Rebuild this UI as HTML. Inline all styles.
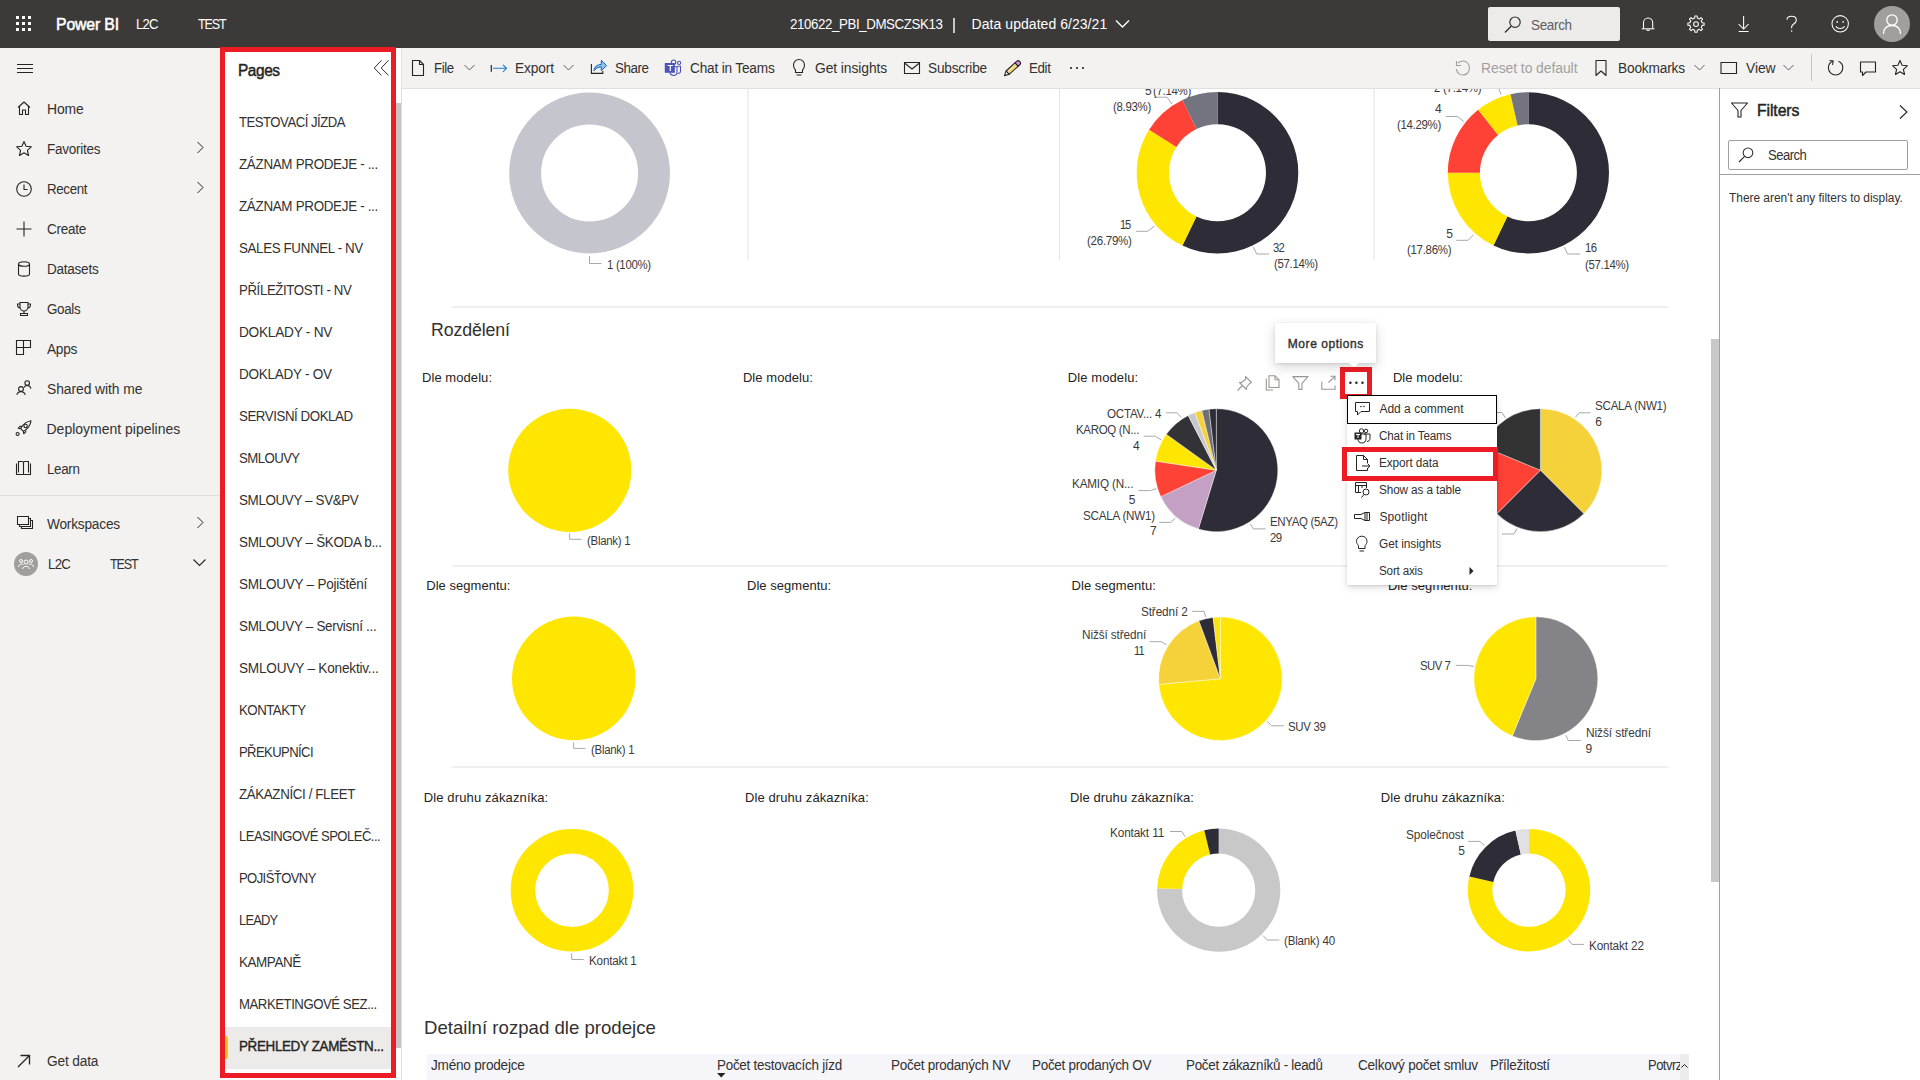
<!DOCTYPE html><html><head><meta charset="utf-8"><style>
*{margin:0;padding:0;box-sizing:border-box}
html,body{width:1920px;height:1080px;overflow:hidden;background:#fff;font-family:"Liberation Sans",sans-serif;position:relative}
.t{position:absolute;white-space:nowrap;line-height:1}
.a{position:absolute}
svg{position:absolute;overflow:visible}
</style></head><body>
<div class="a" style="left:747px;top:88px;width:2px;height:172px;background:#f0f0f0"></div><div class="a" style="left:1059px;top:88px;width:1px;height:172px;background:#e3e3e3"></div><div class="a" style="left:1373px;top:88px;width:2px;height:172px;background:#f0f0f0"></div><div class="a" style="left:452px;top:306px;width:1216px;height:2px;background:#efefef"></div><div class="a" style="left:452px;top:565px;width:1216px;height:2px;background:#efefef"></div><div class="a" style="left:452px;top:766px;width:1216px;height:2px;background:#efefef"></div><svg style="left:0;top:0" width="1920" height="1080"><circle cx="589.6" cy="173" r="64.45" stroke="#c5c5cd" stroke-width="31.900000000000006" fill="none"/><path d="M589.5 256.0 L589.5 263.5 L601.5 263.5" stroke="#a8a8a8" stroke-width="1" fill="none"/><path d="M1217.50 92.00 A80.8 80.8 0 1 1 1182.44 245.60 L1196.46 216.50 A48.5 48.5 0 1 0 1217.50 124.30 Z" fill="#2e2d37"/><path d="M1182.44 245.60 A80.8 80.8 0 0 1 1149.08 129.81 L1176.43 147.00 A48.5 48.5 0 0 0 1196.46 216.50 Z" fill="#ffe600"/><path d="M1149.08 129.81 A80.8 80.8 0 0 1 1182.44 100.00 L1196.46 129.10 A48.5 48.5 0 0 0 1176.43 147.00 Z" fill="#ff4136"/><path d="M1182.44 100.00 A80.8 80.8 0 0 1 1217.50 92.00 L1217.50 124.30 A48.5 48.5 0 0 0 1196.46 129.10 Z" fill="#747480"/><path d="M1528.40 92.20 A80.6 80.6 0 1 1 1493.43 245.42 L1507.36 216.50 A48.5 48.5 0 1 0 1528.40 124.30 Z" fill="#2e2d37"/><path d="M1493.43 245.42 A80.6 80.6 0 0 1 1447.80 172.80 L1479.90 172.80 A48.5 48.5 0 0 0 1507.36 216.50 Z" fill="#ffe600"/><path d="M1447.80 172.80 A80.6 80.6 0 0 1 1478.15 109.78 L1498.16 134.88 A48.5 48.5 0 0 0 1479.90 172.80 Z" fill="#ff4136"/><path d="M1478.15 109.78 A80.6 80.6 0 0 1 1510.46 94.22 L1517.61 125.52 A48.5 48.5 0 0 0 1498.16 134.88 Z" fill="#ffe600"/><path d="M1510.46 94.22 A80.6 80.6 0 0 1 1528.40 92.20 L1528.40 124.30 A48.5 48.5 0 0 0 1517.61 125.52 Z" fill="#747480"/><path d="M1253.3 247.2 L1256.7 254.0 L1268.9 254.0" stroke="#a8a8a8" stroke-width="1" fill="none"/><path d="M1154.2 226.2 L1147.7 231.3 L1136.2 231.3" stroke="#a8a8a8" stroke-width="1" fill="none"/><path d="M1172.0 104.0 L1167.0 97.2 L1154.0 97.2" stroke="#a8a8a8" stroke-width="1" fill="none"/><path d="M1564.4 247.2 L1567.5 254.0 L1580.0 254.0" stroke="#a8a8a8" stroke-width="1" fill="none"/><path d="M1473.5 234.8 L1468.1 240.3 L1456.3 240.3" stroke="#a8a8a8" stroke-width="1" fill="none"/><path d="M1463.7 121.5 L1457.5 116.5 L1445.8 116.5" stroke="#a8a8a8" stroke-width="1" fill="none"/><path d="M1501.2 94.5 L1499.0 89.0" stroke="#a8a8a8" stroke-width="1" fill="none"/><circle cx="569.8" cy="470.3" r="61.6" fill="#ffe600"/><path d="M569.6 533.3 L569.6 539.3 L581.6 539.3" stroke="#a8a8a8" stroke-width="1" fill="none"/><path d="M1216.30 470.20 L1216.30 408.70 A61.5 61.5 0 1 1 1198.34 529.02 Z" fill="#2e2d37" stroke="#fff" stroke-width="0.4"/><path d="M1216.30 470.20 L1198.34 529.02 A61.5 61.5 0 0 1 1160.78 496.65 Z" fill="#c4a0c4" stroke="#fff" stroke-width="0.4"/><path d="M1216.30 470.20 L1160.78 496.65 A61.5 61.5 0 0 1 1155.47 461.12 Z" fill="#ff4136" stroke="#fff" stroke-width="0.4"/><path d="M1216.30 470.20 L1155.47 461.12 A61.5 61.5 0 0 1 1166.33 434.35 Z" fill="#ffe600" stroke="#fff" stroke-width="0.4"/><path d="M1216.30 470.20 L1166.33 434.35 A61.5 61.5 0 0 1 1188.22 415.49 Z" fill="#333337" stroke="#fff" stroke-width="0.4"/><path d="M1216.30 470.20 L1188.22 415.49 A61.5 61.5 0 0 1 1194.89 412.55 Z" fill="#c8c8d0" stroke="#fff" stroke-width="0.4"/><path d="M1216.30 470.20 L1194.89 412.55 A61.5 61.5 0 0 1 1201.85 410.42 Z" fill="#f6d23a" stroke="#fff" stroke-width="0.4"/><path d="M1216.30 470.20 L1201.85 410.42 A61.5 61.5 0 0 1 1209.03 409.13 Z" fill="#6f6f78" stroke="#fff" stroke-width="0.4"/><path d="M1216.30 470.20 L1209.03 409.13 A61.5 61.5 0 0 1 1216.30 408.70 Z" fill="#2e2d37" stroke="#fff" stroke-width="0.4"/><path d="M1250.3 523.8 L1253.4 528.9 L1265.6 528.9" stroke="#a8a8a8" stroke-width="1" fill="none"/><path d="M1175.4 518.1 L1170.7 522.4 L1159.3 522.4" stroke="#a8a8a8" stroke-width="1" fill="none"/><path d="M1156.2 488.6 L1150.6 490.6 L1138.5 490.6" stroke="#a8a8a8" stroke-width="1" fill="none"/><path d="M1161.3 439.9 L1155.3 436.2 L1143.9 436.2" stroke="#a8a8a8" stroke-width="1" fill="none"/><path d="M1181.2 417.4 L1177.1 412.8 L1166.0 412.8" stroke="#a8a8a8" stroke-width="1" fill="none"/><path d="M1540.40 470.20 L1540.40 408.70 A61.5 61.5 0 0 1 1583.89 513.69 Z" fill="#f6d23a" stroke="#fff" stroke-width="0.4"/><path d="M1540.40 470.20 L1583.89 513.69 A61.5 61.5 0 0 1 1496.91 513.69 Z" fill="#2e2d37" stroke="#fff" stroke-width="0.4"/><path d="M1540.40 470.20 L1496.91 513.69 A61.5 61.5 0 0 1 1483.58 446.66 Z" fill="#ff4136" stroke="#fff" stroke-width="0.4"/><path d="M1540.40 470.20 L1483.58 446.66 A61.5 61.5 0 0 1 1540.40 408.70 Z" fill="#333333" stroke="#fff" stroke-width="0.4"/><path d="M1505.5 418.0 L1502.0 412.5 L1497.0 412.5" stroke="#a8a8a8" stroke-width="1" fill="none"/><path d="M1517.0 528.5 L1514.0 534.0 L1502.0 534.0" stroke="#a8a8a8" stroke-width="1" fill="none"/><path d="M1575.3 417.5 L1579.0 412.8 L1590.6 412.8" stroke="#a8a8a8" stroke-width="1" fill="none"/><circle cx="573.8" cy="678.4" r="61.8" fill="#ffe600"/><path d="M573.6 742.3 L573.6 748.4 L585.5 748.4" stroke="#a8a8a8" stroke-width="1" fill="none"/><path d="M1220.40 678.80 L1220.40 617.00 A61.8 61.8 0 1 1 1158.84 684.29 Z" fill="#ffe600" stroke="#fff" stroke-width="0.4"/><path d="M1220.40 678.80 L1158.84 684.29 A61.8 61.8 0 0 1 1198.88 620.87 Z" fill="#f6d23a" stroke="#fff" stroke-width="0.4"/><path d="M1220.40 678.80 L1198.88 620.87 A61.8 61.8 0 0 1 1213.09 617.43 Z" fill="#2e2d37" stroke="#fff" stroke-width="0.4"/><path d="M1220.40 678.80 L1213.09 617.43 A61.8 61.8 0 0 1 1220.40 617.00 Z" fill="#fbe30f" stroke="#fff" stroke-width="0.4"/><path d="M1267.1 721.5 L1271.7 725.8 L1283.8 725.8" stroke="#a8a8a8" stroke-width="1" fill="none"/><path d="M1166.7 645.0 L1161.3 641.7 L1149.6 641.7" stroke="#a8a8a8" stroke-width="1" fill="none"/><path d="M1205.8 617.1 L1204.2 611.3 L1192.1 611.3" stroke="#a8a8a8" stroke-width="1" fill="none"/><path d="M1535.90 678.70 L1535.90 616.80 A61.9 61.9 0 1 1 1512.21 735.89 Z" fill="#838388" stroke="#fff" stroke-width="0.4"/><path d="M1535.90 678.70 L1512.21 735.89 A61.9 61.9 0 0 1 1535.90 616.80 Z" fill="#ffe600" stroke="#fff" stroke-width="0.4"/><path d="M1473.8 666.5 L1467.5 665.4 L1455.6 665.4" stroke="#a8a8a8" stroke-width="1" fill="none"/><path d="M1565.7 735.0 L1568.3 740.5 L1580.8 740.5" stroke="#a8a8a8" stroke-width="1" fill="none"/><circle cx="572" cy="890.2" r="49.05" stroke="#ffe600" stroke-width="24.5" fill="none"/><path d="M571.7 953.3 L571.7 959.5 L583.7 959.5" stroke="#a8a8a8" stroke-width="1" fill="none"/><path d="M1218.70 828.60 A61.6 61.6 0 1 1 1157.13 888.37 L1182.12 889.12 A36.6 36.6 0 1 0 1218.70 853.60 Z" fill="#c8c8c8"/><path d="M1157.13 888.37 A61.6 61.6 0 0 1 1204.23 830.32 L1210.10 854.62 A36.6 36.6 0 0 0 1182.12 889.12 Z" fill="#ffe600"/><path d="M1204.23 830.32 A61.6 61.6 0 0 1 1218.70 828.60 L1218.70 853.60 A36.6 36.6 0 0 0 1210.10 854.62 Z" fill="#2e2d37"/><path d="M1263.0 935.6 L1267.2 940.0 L1279.4 940.0" stroke="#a8a8a8" stroke-width="1" fill="none"/><path d="M1185.2 836.7 L1181.8 831.5 L1170.0 831.5" stroke="#a8a8a8" stroke-width="1" fill="none"/><path d="M1529.00 829.00 A61.2 61.2 0 1 1 1469.33 876.58 L1493.32 882.06 A36.6 36.6 0 1 0 1529.00 853.60 Z" fill="#ffe600"/><path d="M1469.33 876.58 A61.2 61.2 0 0 1 1515.38 830.53 L1520.86 854.52 A36.6 36.6 0 0 0 1493.32 882.06 Z" fill="#2e2d37"/><path d="M1515.38 830.53 A61.2 61.2 0 0 1 1529.00 829.00 L1529.00 853.60 A36.6 36.6 0 0 0 1520.86 854.52 Z" fill="#e1e1e1"/><path d="M1568.3 939.8 L1572.0 944.4 L1584.0 944.4" stroke="#a8a8a8" stroke-width="1" fill="none"/><path d="M1484.6 845.5 L1479.9 841.4 L1468.2 841.4" stroke="#a8a8a8" stroke-width="1" fill="none"/></svg><div class="t " style="left:606.60px;top:258.62px;font-size:12px;color:#3b3a39;font-weight:normal;letter-spacing:-0.337px;transform:scaleX(0.9516);transform-origin:0.00px 0;">1 (100%)</div>
<div class="t " style="left:1273.40px;top:242.12px;font-size:12px;color:#3b3a39;font-weight:normal;letter-spacing:-0.810px;transform:scaleX(0.9392);transform-origin:0.00px 0;">32</div>
<div class="t " style="left:1273.60px;top:257.72px;font-size:12px;color:#3b3a39;font-weight:normal;letter-spacing:-0.337px;transform:scaleX(0.9516);transform-origin:0.00px 0;">(57.14%)</div>
<div class="t " style="left:1120.40px;top:218.72px;font-size:12px;color:#3b3a39;font-weight:normal;letter-spacing:-1.110px;transform:scaleX(0.9167);transform-origin:0.00px 0;">15</div>
<div class="t " style="left:1086.80px;top:234.72px;font-size:12px;color:#3b3a39;font-weight:normal;letter-spacing:-0.273px;transform:scaleX(0.9608);transform-origin:0.00px 0;">(26.79%)</div>
<div class="t " style="left:1112.50px;top:101.22px;font-size:12px;color:#3b3a39;font-weight:normal;letter-spacing:-0.325px;transform:scaleX(0.9536);transform-origin:0.00px 0;">(8.93%)</div>
<div class="t " style="left:1145.00px;top:84.72px;font-size:12px;color:#3b3a39;font-weight:normal;letter-spacing:0.000px;">5</div>
<div class="t " style="left:1152.80px;top:84.72px;font-size:12px;color:#3b3a39;font-weight:normal;letter-spacing:-0.317px;transform:scaleX(0.9548);transform-origin:0.00px 0;">(7.14%)</div>
<div class="t " style="left:1585.00px;top:242.02px;font-size:12px;color:#3b3a39;font-weight:normal;letter-spacing:-0.710px;transform:scaleX(0.9467);transform-origin:0.00px 0;">16</div>
<div class="t " style="left:1584.80px;top:258.62px;font-size:12px;color:#3b3a39;font-weight:normal;letter-spacing:-0.337px;transform:scaleX(0.9516);transform-origin:0.00px 0;">(57.14%)</div>
<div class="t " style="left:1446.30px;top:228.02px;font-size:12px;color:#3b3a39;font-weight:normal;letter-spacing:0.000px;">5</div>
<div class="t " style="left:1406.90px;top:244.22px;font-size:12px;color:#3b3a39;font-weight:normal;letter-spacing:-0.309px;transform:scaleX(0.9557);transform-origin:0.00px 0;">(17.86%)</div>
<div class="t " style="left:1435.00px;top:102.62px;font-size:12px;color:#3b3a39;font-weight:normal;letter-spacing:0.000px;">4</div>
<div class="t " style="left:1396.90px;top:119.32px;font-size:12px;color:#3b3a39;font-weight:normal;letter-spacing:-0.330px;transform:scaleX(0.9526);transform-origin:0.00px 0;">(14.29%)</div>
<div class="t " style="left:1434.10px;top:81.92px;font-size:12px;color:#3b3a39;font-weight:normal;letter-spacing:-0.289px;transform:scaleX(0.9556);transform-origin:0.00px 0;">2 (7.14%)</div>
<div class="t " style="left:431.00px;top:321.12px;font-size:18px;color:#323130;font-weight:normal;letter-spacing:-0.131px;transform:scaleX(0.9871);transform-origin:0.00px 0;">Rozdělení</div>
<div class="t " style="left:422.00px;top:370.93px;font-size:13px;color:#252423;font-weight:normal;letter-spacing:0.064px;">Dle modelu:</div>
<div class="t " style="left:742.90px;top:370.93px;font-size:13px;color:#252423;font-weight:normal;letter-spacing:0.064px;">Dle modelu:</div>
<div class="t " style="left:1067.80px;top:370.93px;font-size:13px;color:#252423;font-weight:normal;letter-spacing:0.094px;">Dle modelu:</div>
<div class="t " style="left:1392.90px;top:370.93px;font-size:13px;color:#252423;font-weight:normal;letter-spacing:0.064px;">Dle modelu:</div>
<div class="t " style="left:426.25px;top:578.83px;font-size:13px;color:#252423;font-weight:normal;letter-spacing:0.029px;">Dle segmentu:</div>
<div class="t " style="left:747.00px;top:578.83px;font-size:13px;color:#252423;font-weight:normal;letter-spacing:0.029px;">Dle segmentu:</div>
<div class="t " style="left:1071.60px;top:578.83px;font-size:13px;color:#252423;font-weight:normal;letter-spacing:0.029px;">Dle segmentu:</div>
<div class="t " style="left:1387.90px;top:578.83px;font-size:13px;color:#252423;font-weight:normal;letter-spacing:0.062px;">Dle segmentu:</div>
<div class="t " style="left:423.75px;top:791.23px;font-size:13px;color:#252423;font-weight:normal;letter-spacing:0.124px;">Dle druhu zákazníka:</div>
<div class="t " style="left:745.00px;top:791.23px;font-size:13px;color:#252423;font-weight:normal;letter-spacing:0.088px;">Dle druhu zákazníka:</div>
<div class="t " style="left:1070.00px;top:791.23px;font-size:13px;color:#252423;font-weight:normal;letter-spacing:0.098px;">Dle druhu zákazníka:</div>
<div class="t " style="left:1380.80px;top:791.23px;font-size:13px;color:#252423;font-weight:normal;letter-spacing:0.098px;">Dle druhu zákazníka:</div>
<div class="t " style="left:586.60px;top:534.72px;font-size:12px;color:#3b3a39;font-weight:normal;letter-spacing:-0.288px;transform:scaleX(0.9521);transform-origin:0.00px 0;">(Blank) 1</div>
<div class="t " style="left:590.50px;top:743.82px;font-size:12px;color:#3b3a39;font-weight:normal;letter-spacing:-0.281px;transform:scaleX(0.9531);transform-origin:0.00px 0;">(Blank) 1</div>
<div class="t " style="left:588.90px;top:954.62px;font-size:12px;color:#3b3a39;font-weight:normal;letter-spacing:-0.188px;transform:scaleX(0.9704);transform-origin:0.00px 0;">Kontakt 1</div>
<div class="t " style="left:1107.30px;top:407.62px;font-size:12px;color:#3b3a39;font-weight:normal;letter-spacing:-0.230px;transform:scaleX(0.9646);transform-origin:0.00px 0;">OCTAV... 4</div>
<div class="t " style="left:1076.00px;top:424.02px;font-size:12px;color:#3b3a39;font-weight:normal;letter-spacing:-0.308px;transform:scaleX(0.9556);transform-origin:0.00px 0;">KAROQ (N...</div>
<div class="t " style="left:1133.10px;top:439.82px;font-size:12px;color:#3b3a39;font-weight:normal;letter-spacing:0.000px;">4</div>
<div class="t " style="left:1072.40px;top:477.72px;font-size:12px;color:#3b3a39;font-weight:normal;letter-spacing:-0.164px;transform:scaleX(0.9746);transform-origin:0.00px 0;">KAMIQ (N...</div>
<div class="t " style="left:1128.80px;top:493.82px;font-size:12px;color:#3b3a39;font-weight:normal;letter-spacing:0.000px;">5</div>
<div class="t " style="left:1082.80px;top:509.62px;font-size:12px;color:#3b3a39;font-weight:normal;letter-spacing:-0.229px;transform:scaleX(0.9701);transform-origin:0.00px 0;">SCALA (NW1)</div>
<div class="t " style="left:1149.90px;top:525.12px;font-size:12px;color:#3b3a39;font-weight:normal;letter-spacing:0.000px;">7</div>
<div class="t " style="left:1270.30px;top:515.82px;font-size:12px;color:#3b3a39;font-weight:normal;letter-spacing:-0.333px;transform:scaleX(0.9553);transform-origin:0.00px 0;">ENYAQ (5AZ)</div>
<div class="t " style="left:1270.30px;top:531.72px;font-size:12px;color:#3b3a39;font-weight:normal;letter-spacing:-0.710px;transform:scaleX(0.9467);transform-origin:0.00px 0;">29</div>
<div class="t " style="left:1595.30px;top:399.52px;font-size:12px;color:#3b3a39;font-weight:normal;letter-spacing:-0.254px;transform:scaleX(0.9669);transform-origin:0.00px 0;">SCALA (NW1)</div>
<div class="t " style="left:1595.30px;top:415.52px;font-size:12px;color:#3b3a39;font-weight:normal;letter-spacing:0.000px;">6</div>
<div class="t " style="left:1141.25px;top:605.62px;font-size:12px;color:#3b3a39;font-weight:normal;letter-spacing:-0.126px;transform:scaleX(0.9793);transform-origin:0.00px 0;">Střední 2</div>
<div class="t " style="left:1081.70px;top:628.82px;font-size:12px;color:#3b3a39;font-weight:normal;letter-spacing:-0.107px;transform:scaleX(0.9808);transform-origin:0.00px 0;">Nižší střední</div>
<div class="t " style="left:1133.75px;top:644.62px;font-size:12px;color:#3b3a39;font-weight:normal;letter-spacing:-0.990px;transform:scaleX(0.9207);transform-origin:0.00px 0;">11</div>
<div class="t " style="left:1288.30px;top:720.62px;font-size:12px;color:#3b3a39;font-weight:normal;letter-spacing:-0.364px;transform:scaleX(0.9560);transform-origin:0.00px 0;">SUV 39</div>
<div class="t " style="left:1420.40px;top:659.62px;font-size:12px;color:#3b3a39;font-weight:normal;letter-spacing:-0.485px;transform:scaleX(0.9441);transform-origin:0.00px 0;">SUV 7</div>
<div class="t " style="left:1585.80px;top:726.72px;font-size:12px;color:#3b3a39;font-weight:normal;letter-spacing:-0.065px;transform:scaleX(0.9883);transform-origin:0.00px 0;">Nižší střední</div>
<div class="t " style="left:1585.50px;top:742.52px;font-size:12px;color:#3b3a39;font-weight:normal;letter-spacing:0.000px;">9</div>
<div class="t " style="left:1109.90px;top:826.72px;font-size:12px;color:#3b3a39;font-weight:normal;letter-spacing:-0.126px;transform:scaleX(0.9800);transform-origin:0.00px 0;">Kontakt 11</div>
<div class="t " style="left:1284.10px;top:934.92px;font-size:12px;color:#3b3a39;font-weight:normal;letter-spacing:-0.201px;transform:scaleX(0.9669);transform-origin:0.00px 0;">(Blank) 40</div>
<div class="t " style="left:1406.20px;top:828.82px;font-size:12px;color:#3b3a39;font-weight:normal;letter-spacing:-0.089px;transform:scaleX(0.9865);transform-origin:0.00px 0;">Společnost</div>
<div class="t " style="left:1458.30px;top:844.72px;font-size:12px;color:#3b3a39;font-weight:normal;letter-spacing:0.000px;">5</div>
<div class="t " style="left:1589.20px;top:939.62px;font-size:12px;color:#3b3a39;font-weight:normal;letter-spacing:-0.137px;transform:scaleX(0.9786);transform-origin:0.00px 0;">Kontakt 22</div>
<div class="t " style="left:424.00px;top:1018.93px;font-size:18.6px;color:#323130;font-weight:normal;letter-spacing:0.012px;">Detailní rozpad dle prodejce</div>
<div class="a" style="left:427px;top:1054px;width:1262px;height:26px;background:#f5f5fa"></div><div class="a" style="left:1680px;top:1054px;width:9px;height:26px;background:#ececec"></div><div class="t " style="left:431.25px;top:1057.65px;font-size:14px;color:#323130;font-weight:normal;letter-spacing:-0.225px;transform:scaleX(0.9706);transform-origin:0.00px 0;">Jméno prodejce</div>
<div class="t " style="left:717.00px;top:1057.65px;font-size:14px;color:#323130;font-weight:normal;letter-spacing:-0.265px;transform:scaleX(0.9591);transform-origin:0.00px 0;">Počet testovacích jízd</div>
<div class="t " style="left:891.25px;top:1057.65px;font-size:14px;color:#323130;font-weight:normal;letter-spacing:-0.269px;transform:scaleX(0.9644);transform-origin:0.00px 0;">Počet prodaných NV</div>
<div class="t " style="left:1032.00px;top:1057.65px;font-size:14px;color:#323130;font-weight:normal;letter-spacing:-0.293px;transform:scaleX(0.9614);transform-origin:0.00px 0;">Počet prodaných OV</div>
<div class="t " style="left:1186.25px;top:1057.65px;font-size:14px;color:#323130;font-weight:normal;letter-spacing:-0.289px;transform:scaleX(0.9575);transform-origin:0.00px 0;">Počet zákazníků - leadů</div>
<div class="t " style="left:1357.80px;top:1057.65px;font-size:14px;color:#323130;font-weight:normal;letter-spacing:-0.233px;transform:scaleX(0.9674);transform-origin:0.00px 0;">Celkový počet smluv</div>
<div class="t " style="left:1490.00px;top:1057.65px;font-size:14px;color:#323130;font-weight:normal;letter-spacing:-0.245px;transform:scaleX(0.9589);transform-origin:0.00px 0;">Příležitostí</div>
<div class="a" style="left:1646px;top:1054px;width:34px;height:26px;overflow:hidden"><div class="t " style="left:1.50px;top:3.65px;font-size:14px;color:#323130;font-weight:normal;letter-spacing:-0.567px;transform:scaleX(0.9281);transform-origin:0.00px 0;">Potvrzeno</div>
</div><svg style="left:717px;top:1073px" width="10" height="6"><path d="M0 0 H8.5 L4.25 4.5 Z" fill="#252423"/></svg><svg style="left:1680px;top:1062px" width="9" height="8"><path d="M1.5 5.5 L4.5 2.5 L7.5 5.5" stroke="#252423" stroke-width="1" fill="none"/></svg><div class="a" style="left:0;top:0;width:1920px;height:48px;background:#3b3a39"></div><svg style="left:0;top:0" width="40" height="48"><rect x="16" y="16" width="3" height="3" fill="#fff"/><rect x="16" y="22" width="3" height="3" fill="#fff"/><rect x="16" y="28" width="3" height="3" fill="#fff"/><rect x="22" y="16" width="3" height="3" fill="#fff"/><rect x="22" y="22" width="3" height="3" fill="#fff"/><rect x="22" y="28" width="3" height="3" fill="#fff"/><rect x="28" y="16" width="3" height="3" fill="#fff"/><rect x="28" y="22" width="3" height="3" fill="#fff"/><rect x="28" y="28" width="3" height="3" fill="#fff"/></svg><div class="t " style="left:56.00px;top:16.69px;font-size:16px;color:#fff;font-weight:normal;letter-spacing:-0.134px;transform:scaleX(0.9855);transform-origin:0.00px 0;-webkit-text-stroke:0.55px #fff">Power BI</div>
<div class="t " style="left:135.60px;top:17.25px;font-size:14px;color:#fff;font-weight:normal;letter-spacing:-0.823px;transform:scaleX(0.9360);transform-origin:0.00px 0;">L2C</div>
<div class="t " style="left:197.50px;top:17.25px;font-size:14px;color:#fff;font-weight:normal;letter-spacing:-1.278px;transform:scaleX(0.8928);transform-origin:0.00px 0;">TEST</div>
<div class="t " style="left:790.30px;top:17.25px;font-size:14px;color:#fff;font-weight:normal;letter-spacing:-0.432px;transform:scaleX(0.9514);transform-origin:0.00px 0;">210622_PBI_DMSCZSK13</div>
<div class="a" style="left:952.5px;top:18px;width:2px;height:15px;background:#c8c6c4"></div><div class="t " style="left:971.60px;top:17.25px;font-size:14px;color:#fff;font-weight:normal;letter-spacing:0.048px;">Data updated 6/23/21</div>
<svg style="left:1115px;top:19px" width="16" height="10"><path d="M1 1.5 L7.5 8 L14 1.5" stroke="#fff" stroke-width="1.4" fill="none"/></svg><div class="a" style="left:1488px;top:7px;width:132px;height:34px;background:#edebe9;border-radius:2px"></div><svg style="left:1503px;top:15px" width="20" height="20"><circle cx="12" cy="7.2" r="5.2" stroke="#323130" stroke-width="1.2" fill="none"/><path d="M8.3 11 L2 17.5" stroke="#323130" stroke-width="1.3"/></svg><div class="t " style="left:1531.00px;top:18.25px;font-size:14px;color:#605e5c;font-weight:normal;letter-spacing:-0.338px;transform:scaleX(0.9619);transform-origin:0.00px 0;">Search</div>
<svg style="left:0;top:0" width="1920" height="48"><path d="M1643.5 28.5 V22.5 A4.6 4.6 0 0 1 1652.7 22.5 V28.5" stroke="#fff" stroke-width="1.05" fill="none"/><path d="M1641.7 28.8 H1654.5" stroke="#fff" stroke-width="1.05" fill="none" stroke-width="1.3"/><path d="M1646.6 29.5 A1.6 1.6 0 0 0 1649.6 29.5" stroke="#fff" stroke-width="1.05" fill="none"/><path d="M1694.71 18.04 L1694.86 15.98 L1697.14 15.98 L1697.29 18.04 L1699.38 18.90 L1700.93 17.55 L1702.55 19.17 L1701.20 20.72 L1702.06 22.81 L1704.12 22.96 L1704.12 25.24 L1702.06 25.39 L1701.20 27.48 L1702.55 29.03 L1700.93 30.65 L1699.38 29.30 L1697.29 30.16 L1697.14 32.22 L1694.86 32.22 L1694.71 30.16 L1692.62 29.30 L1691.07 30.65 L1689.45 29.03 L1690.80 27.48 L1689.94 25.39 L1687.88 25.24 L1687.88 22.96 L1689.94 22.81 L1690.80 20.72 L1689.45 19.17 L1691.07 17.55 L1692.62 18.90 Z" stroke="#fff" stroke-width="1.05" fill="none" stroke-linejoin="round"/><circle cx="1696" cy="24.1" r="2.4" stroke="#fff" stroke-width="1.05" fill="none"/><path d="M1743.6 16.1 V28.6 M1738.6 24 L1743.6 29 L1748.6 24" stroke="#fff" stroke-width="1.05" fill="none"/><path d="M1738.6 31.5 H1748.6" stroke="#fff" stroke-width="1.05" fill="none" stroke-width="1.2"/><path d="M1787 19.8 C1787 17.3 1789 16.3 1791.6 16.3 C1794.4 16.3 1796.3 18 1796.3 20.2 C1796.3 22.3 1795 23.2 1793.4 24.2 C1792.2 25 1791.6 25.8 1791.6 27.3 V28.2" stroke="#fff" stroke-width="1.05" fill="none"/><circle cx="1791.6" cy="31" r="0.75" fill="#fff"/><circle cx="1840.2" cy="23.8" r="8.2" stroke="#fff" stroke-width="1.05" fill="none" stroke-width="1.15"/><rect x="1836.5" y="21.2" width="1.5" height="1.5" fill="#fff"/><rect x="1842.4" y="21.2" width="1.5" height="1.5" fill="#fff"/><path d="M1835.8 26.3 C1837.5 29.3 1842.9 29.3 1844.6 26.3" stroke="#fff" stroke-width="1.05" fill="none"/></svg><div class="a" style="left:1874px;top:6px;width:36px;height:36px;border-radius:50%;background:#a19f9d"></div><svg style="left:1874px;top:6px" width="36" height="36"><circle cx="18" cy="14" r="5.2" stroke="#fff" stroke-width="1.3" fill="none"/><path d="M9.5 28 C9.5 22 13 19.5 18 19.5 C23 19.5 26.5 22 26.5 28" stroke="#fff" stroke-width="1.3" fill="none"/></svg><div class="a" style="left:0;top:48px;width:220px;height:1032px;background:#f3f2f1"></div><svg style="left:0;top:48px" width="40" height="40"><path d="M17 16.5 H33 M17 20.5 H33 M17 24.5 H33" stroke="#252423" stroke-width="1"/></svg><div class="t " style="left:46.50px;top:102.25px;font-size:14px;color:#323130;font-weight:normal;letter-spacing:-0.097px;transform:scaleX(0.9922);transform-origin:0.00px 0;">Home</div>
<div class="t " style="left:46.50px;top:142.25px;font-size:14px;color:#323130;font-weight:normal;letter-spacing:-0.252px;transform:scaleX(0.9649);transform-origin:0.00px 0;">Favorites</div>
<div class="t " style="left:46.50px;top:182.25px;font-size:14px;color:#323130;font-weight:normal;letter-spacing:-0.388px;transform:scaleX(0.9563);transform-origin:0.00px 0;">Recent</div>
<div class="t " style="left:46.50px;top:222.25px;font-size:14px;color:#323130;font-weight:normal;letter-spacing:-0.280px;transform:scaleX(0.9667);transform-origin:0.00px 0;">Create</div>
<div class="t " style="left:46.50px;top:262.25px;font-size:14px;color:#323130;font-weight:normal;letter-spacing:-0.259px;transform:scaleX(0.9671);transform-origin:0.00px 0;">Datasets</div>
<div class="t " style="left:46.50px;top:302.25px;font-size:14px;color:#323130;font-weight:normal;letter-spacing:-0.380px;transform:scaleX(0.9584);transform-origin:0.00px 0;">Goals</div>
<div class="t " style="left:46.50px;top:342.25px;font-size:14px;color:#323130;font-weight:normal;letter-spacing:-0.253px;transform:scaleX(0.9762);transform-origin:0.00px 0;">Apps</div>
<div class="t " style="left:46.50px;top:382.25px;font-size:14px;color:#323130;font-weight:normal;letter-spacing:-0.069px;transform:scaleX(0.9908);transform-origin:0.00px 0;">Shared with me</div>
<div class="t " style="left:46.50px;top:422.25px;font-size:14px;color:#323130;font-weight:normal;letter-spacing:-0.004px;">Deployment pipelines</div>
<div class="t " style="left:46.50px;top:462.25px;font-size:14px;color:#323130;font-weight:normal;letter-spacing:-0.380px;transform:scaleX(0.9576);transform-origin:0.00px 0;">Learn</div>
<svg style="left:15px;top:100px" width="18" height="18"><path d="M3 7.5 L9 2 L15 7.5 M4.5 6.5 V14.5 H7.5 V10 H10.5 V14.5 H13.5 V6.5" stroke="#252423" stroke-width="1.1" fill="none" stroke-linejoin="round"/></svg><svg style="left:15px;top:140px" width="18" height="18"><path d="M9 1.5 L11.1 6.3 L16.3 6.8 L12.4 10.3 L13.5 15.4 L9 12.8 L4.5 15.4 L5.6 10.3 L1.7 6.8 L6.9 6.3 Z" stroke="#252423" stroke-width="1.1" fill="none" stroke-linejoin="round"/></svg><svg style="left:15px;top:180px" width="18" height="18"><circle cx="9" cy="9" r="7.3" stroke="#252423" stroke-width="1.1" fill="none"/><path d="M9 4.5 V9.5 H12.5" stroke="#252423" stroke-width="1.1" fill="none"/></svg><svg style="left:15px;top:220px" width="18" height="18"><path d="M9 1.5 V16.5 M1.5 9 H16.5" stroke="#252423" stroke-width="1.1" fill="none"/></svg><svg style="left:15px;top:260px" width="18" height="18"><ellipse cx="9" cy="4" rx="5.5" ry="2.3" stroke="#252423" stroke-width="1.1" fill="none"/><path d="M3.5 4 V14 C3.5 16.8 14.5 16.8 14.5 14 V4" stroke="#252423" stroke-width="1.1" fill="none"/></svg><svg style="left:15px;top:300px" width="18" height="18"><path d="M5 2.5 H13 V7 C13 9.5 11 11 9 11 C7 11 5 9.5 5 7 Z M5 4 H2.5 C2.5 7 3.5 8 5.3 8 M13 4 H15.5 C15.5 7 14.5 8 12.7 8 M9 11 V13.5 M5.5 13.5 H12.5 V15.5 H5.5 Z" stroke="#252423" stroke-width="1.1" fill="none"/></svg><svg style="left:15px;top:340px" width="18" height="18"><path d="M1.5 0.5 H15.5 V7.5 H1.5 Z M8.5 0.5 V14.5 H1.5 V7.5" stroke="#252423" stroke-width="1.1" fill="none"/></svg><svg style="left:15px;top:380px" width="18" height="18"><circle cx="6" cy="9" r="2.4" stroke="#252423" stroke-width="1.1" fill="none"/><path d="M1.8 14.8 C2.5 12.3 4 11.6 6 11.6 C8 11.6 9.5 12.3 10.2 14.8" stroke="#252423" stroke-width="1.1" fill="none"/><circle cx="12.2" cy="3" r="2.3" stroke="#252423" stroke-width="1.1" fill="none"/><path d="M9 7.6 C9.7 6.2 10.8 5.5 12.2 5.5 C14 5.5 15.4 6.5 16 8.6" stroke="#252423" stroke-width="1.1" fill="none"/></svg><svg style="left:15px;top:420px" width="18" height="18"><path d="M16 0.8 C11.5 1.5 8.3 4 5.6 8.6 L8.4 11.4 C13 8.7 15.3 5.5 16 0.8 Z M5.6 8.6 L3.2 8.3 L5.2 6.2 H7.6 M8.4 11.4 L8.7 13.8 L10.8 11.8 V9.4" stroke="#252423" stroke-width="1.1" fill="none" stroke-linejoin="round"/><circle cx="10.6" cy="6" r="1.7" stroke="#252423" stroke-width="1.1" fill="none"/><circle cx="2.6" cy="14" r="1.5" stroke="#252423" stroke-width="1.1" fill="none"/></svg><svg style="left:15px;top:460px" width="18" height="18"><path d="M1.5 3.5 V14.5 H15.5 V3.5 M3.5 12.5 V1.5 H7.3 C8 1.5 8.5 2 8.5 2.8 V14.5 M8.5 2.8 C8.5 2 9 1.5 9.7 1.5 H13.5 V12.5" stroke="#252423" stroke-width="1.1" fill="none"/></svg><svg style="left:194px;top:141px" width="12" height="14"><path d="M3.5 1 L9 6.5 L3.5 12" stroke="#252423" stroke-width="1" fill="none"/></svg><svg style="left:194px;top:181px" width="12" height="14"><path d="M3.5 1 L9 6.5 L3.5 12" stroke="#252423" stroke-width="1" fill="none"/></svg><svg style="left:194px;top:516px" width="12" height="14"><path d="M3.5 1 L9 6.5 L3.5 12" stroke="#252423" stroke-width="1" fill="none"/></svg><div class="a" style="left:0;top:495px;width:220px;height:1px;background:#e1dfdd"></div><div class="t " style="left:47.20px;top:516.95px;font-size:14px;color:#323130;font-weight:normal;letter-spacing:-0.205px;transform:scaleX(0.9760);transform-origin:0.00px 0;">Workspaces</div>
<svg style="left:15px;top:515px" width="20" height="18"><path d="M2.5 1.5 H13.5 V9.5 H2.5 Z M4.5 9.5 V11.5 H15.5 V3.5 H13.5 M6.5 11.5 V13.5 H17.5 V5.5 H15.5" stroke="#252423" stroke-width="1.05" fill="none"/></svg><div class="a" style="left:14px;top:551.5px;width:24px;height:24px;border-radius:50%;background:#a19f9d"></div><svg style="left:14px;top:551.5px" width="24" height="24"><circle cx="12" cy="10" r="2" stroke="#fff" fill="none"/><circle cx="7" cy="9" r="1.5" stroke="#fff" fill="none"/><circle cx="17" cy="9" r="1.5" stroke="#fff" fill="none"/><path d="M8.5 17 C9 13.5 15 13.5 15.5 17 M4.5 15 C5 12 8 11.5 9.5 12.5 M19.5 15 C19 12 16 11.5 14.5 12.5" stroke="#fff" fill="none"/></svg><div class="t " style="left:48.40px;top:557.15px;font-size:14px;color:#323130;font-weight:normal;letter-spacing:-0.748px;transform:scaleX(0.9418);transform-origin:0.00px 0;">L2C</div>
<div class="t " style="left:110.20px;top:557.15px;font-size:14px;color:#323130;font-weight:normal;letter-spacing:-1.228px;transform:scaleX(0.8970);transform-origin:0.00px 0;">TEST</div>
<svg style="left:192px;top:558px" width="16" height="10"><path d="M1.5 1.5 L7.5 7.5 L13.5 1.5" stroke="#252423" stroke-width="1.1" fill="none"/></svg><svg style="left:15px;top:1052px" width="18" height="18"><path d="M3 15 L14 4 M5.5 3.5 H14.5 V12.5" stroke="#252423" stroke-width="1.3" fill="none"/></svg><div class="t " style="left:46.60px;top:1054.05px;font-size:14px;color:#323130;font-weight:normal;letter-spacing:-0.161px;transform:scaleX(0.9790);transform-origin:0.00px 0;">Get data</div>
<div class="a" style="left:220px;top:48px;width:181px;height:1032px;background:#fff"></div><div class="t " style="left:237.50px;top:62.79px;font-size:16px;color:#252423;font-weight:normal;letter-spacing:-0.420px;transform:scaleX(0.9630);transform-origin:0.00px 0;-webkit-text-stroke:0.45px #252423">Pages</div>
<svg style="left:372px;top:58px" width="20" height="20"><path d="M9.5 2.3 L2.2 10 L9.5 17.4 M16.5 2.3 L9.2 10 L16.5 17.4" stroke="#323130" stroke-width="1" fill="none"/></svg><div class="a" style="left:225px;top:1027px;width:166px;height:42px;background:#edebe9"></div><div class="a" style="left:225px;top:1036px;width:3px;height:23px;background:#f2c811;border-radius:0 2px 2px 0"></div><div class="t " style="left:238.50px;top:114.95px;font-size:14px;color:#323130;font-weight:normal;letter-spacing:-0.528px;transform:scaleX(0.9388);transform-origin:0.00px 0;">TESTOVACÍ JÍZDA</div>
<div class="t " style="left:238.50px;top:156.95px;font-size:14px;color:#323130;font-weight:normal;letter-spacing:-0.334px;transform:scaleX(0.9582);transform-origin:0.00px 0;">ZÁZNAM PRODEJE - ...</div>
<div class="t " style="left:238.50px;top:198.95px;font-size:14px;color:#323130;font-weight:normal;letter-spacing:-0.334px;transform:scaleX(0.9582);transform-origin:0.00px 0;">ZÁZNAM PRODEJE - ...</div>
<div class="t " style="left:238.50px;top:240.95px;font-size:14px;color:#323130;font-weight:normal;letter-spacing:-0.388px;transform:scaleX(0.9544);transform-origin:0.00px 0;">SALES FUNNEL - NV</div>
<div class="t " style="left:238.50px;top:282.95px;font-size:14px;color:#323130;font-weight:normal;letter-spacing:-0.418px;transform:scaleX(0.9468);transform-origin:0.00px 0;">PŘÍLEŽITOSTI - NV</div>
<div class="t " style="left:238.50px;top:324.95px;font-size:14px;color:#323130;font-weight:normal;letter-spacing:-0.235px;transform:scaleX(0.9738);transform-origin:0.00px 0;">DOKLADY - NV</div>
<div class="t " style="left:238.50px;top:366.95px;font-size:14px;color:#323130;font-weight:normal;letter-spacing:-0.292px;transform:scaleX(0.9676);transform-origin:0.00px 0;">DOKLADY - OV</div>
<div class="t " style="left:238.50px;top:408.95px;font-size:14px;color:#323130;font-weight:normal;letter-spacing:-0.456px;transform:scaleX(0.9496);transform-origin:0.00px 0;">SERVISNÍ DOKLAD</div>
<div class="t " style="left:238.50px;top:450.95px;font-size:14px;color:#323130;font-weight:normal;letter-spacing:-0.622px;transform:scaleX(0.9455);transform-origin:0.00px 0;">SMLOUVY</div>
<div class="t " style="left:238.50px;top:492.95px;font-size:14px;color:#323130;font-weight:normal;letter-spacing:-0.389px;transform:scaleX(0.9583);transform-origin:0.00px 0;">SMLOUVY – SV&amp;PV</div>
<div class="t " style="left:238.50px;top:534.95px;font-size:14px;color:#323130;font-weight:normal;letter-spacing:-0.332px;transform:scaleX(0.9593);transform-origin:0.00px 0;">SMLOUVY – ŠKODA b...</div>
<div class="t " style="left:238.50px;top:576.95px;font-size:14px;color:#323130;font-weight:normal;letter-spacing:-0.261px;transform:scaleX(0.9659);transform-origin:0.00px 0;">SMLOUVY – Pojištění</div>
<div class="t " style="left:238.50px;top:618.95px;font-size:14px;color:#323130;font-weight:normal;letter-spacing:-0.299px;transform:scaleX(0.9582);transform-origin:0.00px 0;">SMLOUVY – Servisní ...</div>
<div class="t " style="left:238.50px;top:660.95px;font-size:14px;color:#323130;font-weight:normal;letter-spacing:-0.211px;transform:scaleX(0.9716);transform-origin:0.00px 0;">SMLOUVY – Konektiv...</div>
<div class="t " style="left:238.50px;top:702.95px;font-size:14px;color:#323130;font-weight:normal;letter-spacing:-0.544px;transform:scaleX(0.9489);transform-origin:0.00px 0;">KONTAKTY</div>
<div class="t " style="left:238.50px;top:744.95px;font-size:14px;color:#323130;font-weight:normal;letter-spacing:-0.634px;transform:scaleX(0.9334);transform-origin:0.00px 0;">PŘEKUPNÍCI</div>
<div class="t " style="left:238.50px;top:786.95px;font-size:14px;color:#323130;font-weight:normal;letter-spacing:-0.384px;transform:scaleX(0.9522);transform-origin:0.00px 0;">ZÁKAZNÍCI / FLEET</div>
<div class="t " style="left:238.50px;top:828.95px;font-size:14px;color:#323130;font-weight:normal;letter-spacing:-0.571px;transform:scaleX(0.9332);transform-origin:0.00px 0;">LEASINGOVÉ SPOLEČ...</div>
<div class="t " style="left:238.50px;top:870.95px;font-size:14px;color:#323130;font-weight:normal;letter-spacing:-0.649px;transform:scaleX(0.9341);transform-origin:0.00px 0;">POJIŠŤOVNY</div>
<div class="t " style="left:238.50px;top:912.95px;font-size:14px;color:#323130;font-weight:normal;letter-spacing:-0.878px;transform:scaleX(0.9236);transform-origin:0.00px 0;">LEADY</div>
<div class="t " style="left:238.50px;top:954.95px;font-size:14px;color:#323130;font-weight:normal;letter-spacing:-0.442px;transform:scaleX(0.9606);transform-origin:0.00px 0;">KAMPANĚ</div>
<div class="t " style="left:238.50px;top:996.95px;font-size:14px;color:#323130;font-weight:normal;letter-spacing:-0.498px;transform:scaleX(0.9425);transform-origin:0.00px 0;">MARKETINGOVÉ SEZ...</div>
<div class="t " style="left:238.50px;top:1038.95px;font-size:14px;color:#252423;font-weight:normal;letter-spacing:-0.362px;transform:scaleX(0.9586);transform-origin:0.00px 0;-webkit-text-stroke:0.4px #252423">PŘEHLEDY ZAMĚSTN...</div>
<div class="a" style="left:396px;top:103px;width:5px;height:945px;background:#c8c6c4"></div><div class="a" style="left:401px;top:48px;width:1px;height:1032px;background:#e1dfdd"></div><div class="a" style="left:220px;top:47px;width:176px;height:1031px;border:5px solid #ed1c24"></div><div class="a" style="left:402px;top:48px;width:1518px;height:41px;background:#f3f2f1;border-bottom:1px solid #e1dfdd"></div><svg style="left:410px;top:59px" width="16" height="18"><path d="M2.5 1.5 H9.5 L13.5 5.5 V16.5 H2.5 Z M9.5 1.5 V5.5 H13.5" stroke="#252423" stroke-width="1.1" fill="none" stroke-linejoin="round"/></svg><div class="t " style="left:434.00px;top:61.25px;font-size:14px;color:#323130;font-weight:normal;letter-spacing:-0.423px;transform:scaleX(0.9437);transform-origin:0.00px 0;">File</div>
<svg style="left:463px;top:63px" width="14" height="10"><path d="M1.5 2 L6.5 7 L11.5 2" stroke="#605e5c" stroke-width="1" fill="none"/></svg><svg style="left:0;top:0" width="1920" height="90"><path d="M491.3 65 V71.8" stroke="#252423" stroke-width="1.2"/><path d="M493 68.3 H506.5 M503 64.8 L506.5 68.3 L503 71.8" stroke="#1b7fc9" stroke-width="1.1" fill="none"/></svg><div class="t " style="left:515.00px;top:61.25px;font-size:14px;color:#323130;font-weight:normal;letter-spacing:-0.146px;transform:scaleX(0.9820);transform-origin:0.00px 0;">Export</div>
<svg style="left:562px;top:63px" width="14" height="10"><path d="M1.5 2 L6.5 7 L11.5 2" stroke="#605e5c" stroke-width="1" fill="none"/></svg><svg style="left:0;top:0" width="1920" height="90"><path d="M591.4 64 V73.4 H602.8 V71" stroke="#252423" stroke-width="1.1" fill="none"/><path d="M594 70.8 C594.5 66.5 597 64.6 601.3 64.4 V60.3 L606.6 65.5 L601.3 70.8 V66.9 C598.2 66.9 595.8 68.3 594 70.8 Z" fill="#8cc1ef" stroke="#1565b8" stroke-width="1" stroke-linejoin="round"/></svg><div class="t " style="left:615.00px;top:61.25px;font-size:14px;color:#323130;font-weight:normal;letter-spacing:-0.423px;transform:scaleX(0.9548);transform-origin:0.00px 0;">Share</div>
<svg style="left:0;top:0" width="1920" height="90"><g stroke="#464eb8" stroke-width="1.05" fill="none"><circle cx="673.6" cy="62.2" r="2.2"/><circle cx="679.1" cy="62.9" r="1.6"/><path d="M674.5 66.7 H677 V72 C677 74.3 675.4 75.4 673.5 75.4 C671.9 75.4 670.5 74.5 669.8 72.8 M677.4 66.3 H680.5 V71.3 C680.5 72.7 679.5 73.5 677.6 73.4"/></g><rect x="664.8" y="63" width="10" height="9.8" fill="#4b53bc"/><path d="M667.6 65.5 H673 M670.3 65.5 V71" stroke="#fff" stroke-width="1.2"/></svg><div class="t " style="left:689.80px;top:61.25px;font-size:14px;color:#323130;font-weight:normal;letter-spacing:-0.190px;transform:scaleX(0.9745);transform-origin:0.00px 0;">Chat in Teams</div>
<svg style="left:791px;top:58px" width="16" height="20"><path d="M4.5 12 C3 10.5 2.5 9 2.5 7 C2.5 3.8 5 1.5 8 1.5 C11 1.5 13.5 3.8 13.5 7 C13.5 9 13 10.5 11.5 12 V14.5 H4.5 Z M5.5 17 H10.5" stroke="#252423" stroke-width="1.1" fill="none"/></svg><div class="t " style="left:815.20px;top:61.25px;font-size:14px;color:#323130;font-weight:normal;letter-spacing:-0.078px;transform:scaleX(0.9884);transform-origin:0.00px 0;">Get insights</div>
<svg style="left:903px;top:60px" width="18" height="16"><path d="M1.5 2.5 H16.5 V13.5 H1.5 Z M1.5 3 L9 9 L16.5 3" stroke="#252423" stroke-width="1.1" fill="none"/></svg><div class="t " style="left:928.30px;top:61.25px;font-size:14px;color:#323130;font-weight:normal;letter-spacing:-0.196px;transform:scaleX(0.9749);transform-origin:0.00px 0;">Subscribe</div>
<svg style="left:1003px;top:59px" width="20" height="20"><g transform="translate(1.4,16.6) rotate(-42.3)"><path d="M0 0 L4.5 -2.3 V2.3 Z" fill="#fff" stroke="#252423" stroke-width="1.1" stroke-linejoin="round"/><rect x="4.5" y="-2.3" width="12" height="4.6" fill="#f8dc8a" stroke="#252423" stroke-width="1.1"/><path d="M16.5 -2.3 H19 C20.3 -2.3 20.8 -1.5 20.8 0 C20.8 1.5 20.3 2.3 19 2.3 H16.5 Z" fill="#dc8fe6" stroke="#252423" stroke-width="1.1"/></g></svg><div class="t " style="left:1029.00px;top:61.25px;font-size:14px;color:#323130;font-weight:normal;letter-spacing:-0.392px;transform:scaleX(0.9513);transform-origin:0.00px 0;">Edit</div>
<svg style="left:1068px;top:62px" width="18" height="12"><circle cx="3" cy="6" r="1.1" fill="#252423"/><circle cx="9" cy="6" r="1.1" fill="#252423"/><circle cx="15" cy="6" r="1.1" fill="#252423"/></svg><svg style="left:1453px;top:59px" width="20" height="18"><path d="M5 4 C7 2.5 8.5 2 10 2 C13.8 2 16.5 5 16.5 9 C16.5 13 13.5 16 10 16 C6.5 16 3.5 13.5 3.5 10 M3.5 2 V6.5 H8" stroke="#a19f9d" stroke-width="1.1" fill="none"/></svg><div class="t " style="left:1480.50px;top:61.25px;font-size:14px;color:#a19f9d;font-weight:normal;letter-spacing:-0.052px;transform:scaleX(0.9920);transform-origin:0.00px 0;">Reset to default</div>
<svg style="left:1594px;top:59px" width="14" height="18"><path d="M2 1.5 H12 V16.5 L7 12 L2 16.5 Z" stroke="#252423" stroke-width="1.1" fill="none" stroke-linejoin="round"/></svg><div class="t " style="left:1618.00px;top:61.25px;font-size:14px;color:#323130;font-weight:normal;letter-spacing:-0.188px;transform:scaleX(0.9786);transform-origin:0.00px 0;">Bookmarks</div>
<svg style="left:1693px;top:63px" width="14" height="10"><path d="M1.5 2 L6.5 7 L11.5 2" stroke="#605e5c" stroke-width="1" fill="none"/></svg><svg style="left:1719px;top:60px" width="20" height="16"><path d="M2 2.5 H17.5 V13.5 H2 Z" stroke="#252423" stroke-width="1.1" fill="none"/></svg><div class="t " style="left:1745.50px;top:61.25px;font-size:14px;color:#323130;font-weight:normal;letter-spacing:-0.100px;transform:scaleX(0.9900);transform-origin:0.00px 0;">View</div>
<svg style="left:1782px;top:63px" width="14" height="10"><path d="M1.5 2 L6.5 7 L11.5 2" stroke="#605e5c" stroke-width="1" fill="none"/></svg><div class="a" style="left:1811px;top:54px;width:1px;height:27px;background:#c8c6c4"></div><svg style="left:1826px;top:59px" width="20" height="18"><path d="M12.5 2.2 C15 3.3 16.8 5.8 16.8 8.8 C16.8 12.8 13.6 16 9.6 16 C5.6 16 2.4 12.8 2.4 8.8 C2.4 5.5 4.5 3 7.2 2 M3.5 1.5 L7.2 2 L6.5 5.8" stroke="#252423" stroke-width="1.1" fill="none"/></svg><svg style="left:1859px;top:60px" width="18" height="18"><path d="M1.5 2 H16.5 V12 H7 L3.5 15.5 V12 H1.5 Z" stroke="#252423" stroke-width="1.1" fill="none" stroke-linejoin="round"/></svg><svg style="left:1891px;top:59px" width="18" height="18"><path d="M9 1.5 L11.1 6.3 L16.3 6.8 L12.4 10.3 L13.5 15.4 L9 12.8 L4.5 15.4 L5.6 10.3 L1.7 6.8 L6.9 6.3 Z" stroke="#252423" stroke-width="1.1" fill="none" stroke-linejoin="round"/></svg><div class="a" style="left:1719px;top:88px;width:1px;height:992px;background:#a19f9d"></div><svg style="left:1730px;top:101px" width="20" height="18"><path d="M1.5 2 H17.5 L11 9.5 V16 H8 V9.5 Z" stroke="#252423" stroke-width="1.1" fill="none" stroke-linejoin="round"/></svg><div class="t " style="left:1756.70px;top:102.79px;font-size:16px;color:#252423;font-weight:normal;letter-spacing:-0.102px;transform:scaleX(0.9860);transform-origin:0.00px 0;-webkit-text-stroke:0.45px #252423">Filters</div>
<svg style="left:1897px;top:104px" width="14" height="16"><path d="M3 1.5 L10 8 L3 14.5" stroke="#252423" stroke-width="1.1" fill="none"/></svg><div class="a" style="left:1728px;top:140px;width:180px;height:30px;border:1px solid #a19f9d;border-radius:2px"></div><svg style="left:1737px;top:146px" width="18" height="18"><circle cx="11" cy="6.8" r="4.8" stroke="#323130" stroke-width="1.1" fill="none"/><path d="M7.6 10.3 L2 16" stroke="#323130" stroke-width="1.2"/></svg><div class="t " style="left:1768.30px;top:148.25px;font-size:14px;color:#323130;font-weight:normal;letter-spacing:-0.578px;transform:scaleX(0.9349);transform-origin:0.00px 0;">Search</div>
<div class="a" style="left:1720px;top:174px;width:200px;height:1px;background:#a19f9d"></div><div class="t " style="left:1729.00px;top:192.22px;font-size:12px;color:#323130;font-weight:normal;letter-spacing:-0.024px;transform:scaleX(0.9952);transform-origin:0.00px 0;">There aren't any filters to display.</div>
<div class="a" style="left:1711px;top:339px;width:8px;height:543px;background:#c8c8c8"></div><svg style="left:0;top:0" width="1920" height="1080"><path d="M1245.5 376.5 L1251.5 382.5 L1249.5 383.5 L1246.5 387.5 V389.5 L1239.5 382.5 H1241.5 L1245.5 379.5 Z M1242.5 385.5 L1237.5 390.5" stroke="#9a9896" stroke-width="1.1" fill="none" stroke-linejoin="round"/><path d="M1266.3 378.5 V390 H1273 M1269 375.7 H1275 L1279 379.7 V387.5 H1269 Z M1275 375.7 V379.7 H1279" stroke="#9a9896" stroke-width="1.1" fill="none"/><path d="M1292.8 376.6 H1308 L1302 383.3 V389.4 H1298.8 V383.3 Z" stroke="#9a9896" stroke-width="1.1" fill="none" stroke-linejoin="round"/><path d="M1321.8 381.5 V389.2 H1335 V385.5 M1328.5 382.5 L1335 376.3 M1330.5 376.3 H1335 V380.5" stroke="#9a9896" stroke-width="1.1" fill="none"/></svg><svg style="left:0;top:0" width="1920" height="1080"><circle cx="1350.4" cy="382.8" r="1.25" fill="#252423"/><circle cx="1356.4" cy="382.8" r="1.25" fill="#252423"/><circle cx="1362.5" cy="382.8" r="1.25" fill="#252423"/></svg><div class="a" style="left:1340px;top:367px;width:32px;height:32px;border:5px solid #ed1c24"></div><div class="a" style="left:1275px;top:323px;width:101px;height:40px;background:#fff;box-shadow:0 4px 12px rgba(0,0,0,.16),0 1px 3px rgba(0,0,0,.1)"></div><svg style="left:0;top:0" width="1920" height="1080"><path d="M1348.5 362.5 L1354 367 L1359.5 362.5 Z" fill="#fff"/></svg><div class="t " style="left:1287.80px;top:337.52px;font-size:12px;color:#323130;font-weight:normal;letter-spacing:0.558px;-webkit-text-stroke:0.4px #323130">More options</div>
<div class="a" style="left:1347px;top:395px;width:150px;height:190px;background:#fff;box-shadow:0 3.2px 7.2px rgba(0,0,0,.13),0 0.6px 1.8px rgba(0,0,0,.11)"></div><div class="a" style="left:1347px;top:395px;width:150px;height:29px;border:1px solid #000"></div><div class="t " style="left:1379.40px;top:402.72px;font-size:12px;color:#323130;font-weight:normal;letter-spacing:0.012px;">Add a comment</div>
<div class="t " style="left:1379.40px;top:429.92px;font-size:12px;color:#323130;font-weight:normal;letter-spacing:-0.167px;transform:scaleX(0.9739);transform-origin:0.00px 0;">Chat in Teams</div>
<div class="t " style="left:1379.40px;top:456.72px;font-size:12px;color:#323130;font-weight:normal;letter-spacing:-0.092px;transform:scaleX(0.9850);transform-origin:0.00px 0;">Export data</div>
<div class="t " style="left:1379.40px;top:484.42px;font-size:12px;color:#323130;font-weight:normal;letter-spacing:-0.121px;transform:scaleX(0.9802);transform-origin:0.00px 0;">Show as a table</div>
<div class="t " style="left:1379.40px;top:510.92px;font-size:12px;color:#323130;font-weight:normal;letter-spacing:0.152px;">Spotlight</div>
<div class="t " style="left:1379.40px;top:537.82px;font-size:12px;color:#323130;font-weight:normal;letter-spacing:-0.057px;transform:scaleX(0.9901);transform-origin:0.00px 0;">Get insights</div>
<div class="t " style="left:1379.40px;top:564.82px;font-size:12px;color:#323130;font-weight:normal;letter-spacing:-0.180px;transform:scaleX(0.9692);transform-origin:0.00px 0;">Sort axis</div>
<svg style="left:1354px;top:401px" width="18" height="16"><path d="M1.5 1.5 H15.5 V10.5 H7 L3.5 14 V10.5 H1.5 Z" stroke="#252423" stroke-width="1" fill="none" stroke-linejoin="round"/><circle cx="7" cy="5.5" r="0.8" fill="#252423"/><circle cx="10" cy="5.5" r="0.8" fill="#252423"/></svg><svg style="left:1354px;top:428px" width="18" height="16"><circle cx="12" cy="3" r="1.8" stroke="#252423" fill="none"/><path d="M10 6 H16 V10.5 C16 12.5 14.5 13.5 13 13.5" stroke="#252423" fill="none"/><circle cx="7.5" cy="3" r="2.2" stroke="#252423" fill="none"/><path d="M4 6 H12 V11 C12 13.5 10.5 15 8 15 C5.5 15 4 13.5 4 11" stroke="#252423" fill="none"/><rect x="0.5" y="4.5" width="7" height="7" fill="#252423"/><path d="M2 6.5 H6 M4 6.5 V10" stroke="#fff" stroke-width="1"/></svg><svg style="left:1354px;top:454px" width="18" height="18"><path d="M2.5 1.5 H9.5 L13.5 5.5 V9 M13.5 14 V16.5 H2.5 V1.5 M9.5 1.5 V5.5 H13.5 M8 12 H16 M13.5 9.5 L16 12 L13.5 14.5" stroke="#252423" stroke-width="1" fill="none"/></svg><svg style="left:1354px;top:481px" width="18" height="18"><path d="M1.5 1.5 H12.5 V7 M1.5 1.5 V11.5 H7 M1.5 4.5 H12.5 M4.5 4.5 V11.5 M8 4.5 V7" stroke="#252423" stroke-width="1" fill="none"/><circle cx="12" cy="11" r="3" stroke="#252423" stroke-width="1" fill="none"/><path d="M10 13.5 L7.5 16.5" stroke="#252423" stroke-width="1" fill="none"/></svg><svg style="left:1353px;top:510px" width="18" height="14"><path d="M1.5 4.5 H8 L12 2.5 V10.5 L8 8.5 H1.5 Z M12 2.5 H16.5 V10.5 H12 M14 2.5 V10.5" stroke="#252423" stroke-width="1" fill="none"/></svg><svg style="left:1355px;top:535px" width="14" height="18"><path d="M3.5 10.5 C2.3 9.3 1.5 8 1.5 6.3 C1.5 3.3 3.8 1.2 6.8 1.2 C9.8 1.2 12 3.3 12 6.3 C12 8 11.3 9.3 10 10.5 V13.5 H3.5 Z M4.5 16 H9" stroke="#252423" stroke-width="1" fill="none"/></svg><svg style="left:1468px;top:566px" width="8" height="10"><path d="M1.5 1 L5.5 5 L1.5 9 Z" fill="#252423"/></svg><div class="a" style="left:1342px;top:447px;width:156px;height:34px;border:5px solid #ed1c24"></div></body></html>
